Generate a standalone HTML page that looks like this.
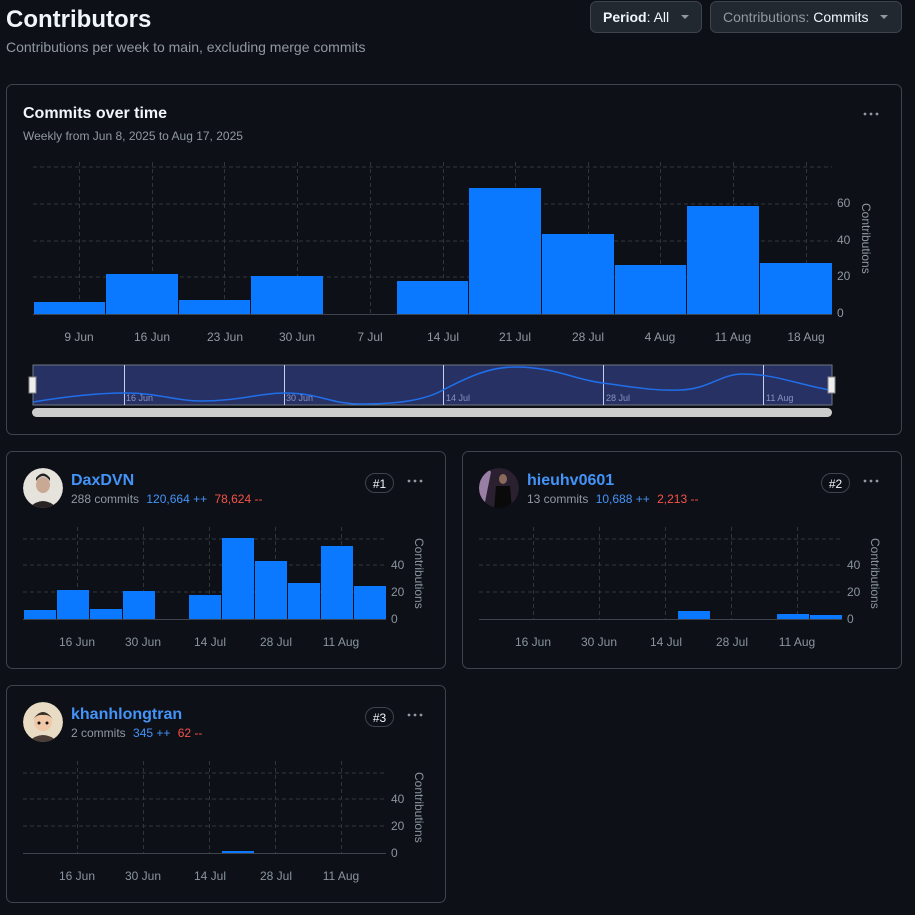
<!DOCTYPE html>
<html><head><meta charset="utf-8"><style>
html,body{margin:0;padding:0;background:#0d1117;}
body{width:915px;height:910px;overflow:hidden;font-family:"Liberation Sans",sans-serif;}
svg text{font-family:"Liberation Sans",sans-serif;}
</style></head><body>
<svg width="915" height="910" viewBox="0 0 915 910" xmlns="http://www.w3.org/2000/svg">
<defs>
<clipPath id="c1"><circle cx="43" cy="488" r="20"/></clipPath>
<clipPath id="c2"><circle cx="499" cy="488" r="20"/></clipPath>
<clipPath id="c3"><circle cx="43" cy="722" r="20"/></clipPath>
<g id="mini">
  <g stroke="#30363d" stroke-dasharray="4 3" stroke-width="1">
    <line x1="23" y1="539" x2="386" y2="539"/>
    <line x1="23" y1="565" x2="386" y2="565"/>
    <line x1="23" y1="592" x2="386" y2="592"/>
    <line x1="77.5" y1="527" x2="77.5" y2="619"/>
    <line x1="143.5" y1="527" x2="143.5" y2="619"/>
    <line x1="209.5" y1="527" x2="209.5" y2="619"/>
    <line x1="275.5" y1="527" x2="275.5" y2="619"/>
    <line x1="341.5" y1="527" x2="341.5" y2="619"/>
  </g>
  <g fill="#8b949e" font-size="12">
    <text x="391" y="569">40</text><text x="391" y="596">20</text><text x="391" y="623">0</text>
    <text x="77" y="646" text-anchor="middle">16 Jun</text>
    <text x="143" y="646" text-anchor="middle">30 Jun</text>
    <text x="210" y="646" text-anchor="middle">14 Jul</text>
    <text x="276" y="646" text-anchor="middle">28 Jul</text>
    <text x="341" y="646" text-anchor="middle">11 Aug</text>
    <text transform="translate(415,538) rotate(90)" font-size="12">Contributions</text>
  </g>
</g>
</defs>

<!-- header -->
<text x="6" y="27" fill="#f0f6fc" font-size="24" font-weight="bold">Contributors</text>
<text x="6" y="52" fill="#9198a1" font-size="14">Contributions per week to main, excluding merge commits</text>
<rect x="590.5" y="1.5" width="111" height="31" rx="6" fill="#212830" stroke="#3d444d"/>
<text x="603" y="22" fill="#f0f6fc" font-size="14"><tspan font-weight="bold">Period</tspan>: All</text>
<path d="M681 15h8l-4 4z" fill="#9198a1"/>
<rect x="710.5" y="1.5" width="191" height="31" rx="6" fill="#212830" stroke="#3d444d"/>
<text x="723" y="22" fill="#9198a1" font-size="14">Contributions: <tspan fill="#f0f6fc">Commits</tspan></text>
<path d="M880 15h8l-4 4z" fill="#9198a1"/>

<!-- main card -->
<rect x="6.5" y="84.5" width="895" height="350" rx="6" fill="#0d1117" stroke="#3d444d"/>
<text x="23" y="118" fill="#f0f6fc" font-size="16" font-weight="bold">Commits over time</text>
<text x="23" y="140" fill="#9198a1" font-size="12">Weekly from Jun 8, 2025 to Aug 17, 2025</text>
<g fill="#9198a1"><circle cx="865" cy="114" r="1.4"/><circle cx="871" cy="114" r="1.4"/><circle cx="877" cy="114" r="1.4"/></g>
<g stroke="#30363d" stroke-dasharray="4 3">
  <line x1="33" y1="167" x2="832" y2="167"/>
  <line x1="33" y1="204" x2="832" y2="204"/>
  <line x1="33" y1="241" x2="832" y2="241"/>
  <line x1="33" y1="277" x2="832" y2="277"/>
  <line x1="79.5" y1="162" x2="79.5" y2="314"/><line x1="152.5" y1="162" x2="152.5" y2="314"/>
  <line x1="224.5" y1="162" x2="224.5" y2="314"/><line x1="297.5" y1="162" x2="297.5" y2="314"/>
  <line x1="370.5" y1="162" x2="370.5" y2="314"/><line x1="443.5" y1="162" x2="443.5" y2="314"/>
  <line x1="515.5" y1="162" x2="515.5" y2="314"/><line x1="588.5" y1="162" x2="588.5" y2="314"/>
  <line x1="660.5" y1="162" x2="660.5" y2="314"/><line x1="733.5" y1="162" x2="733.5" y2="314"/>
  <line x1="806.5" y1="162" x2="806.5" y2="314"/>
</g>
<g fill="#0a78ff">
  <rect x="34" y="302" width="71" height="12"/><rect x="106" y="274" width="72" height="40"/>
  <rect x="179" y="300" width="71" height="14"/><rect x="251" y="276" width="72" height="38"/>
  <rect x="397" y="281" width="71" height="33"/><rect x="469" y="188" width="72" height="126"/>
  <rect x="542" y="234" width="72" height="80"/><rect x="615" y="265" width="71" height="49"/>
  <rect x="687" y="206" width="72" height="108"/><rect x="760" y="263" width="72" height="51"/>
</g>
<line x1="33" y1="314.5" x2="832" y2="314.5" stroke="#3d444d"/>
<g fill="#9198a1" font-size="12" text-anchor="middle">
  <text x="79" y="341">9 Jun</text><text x="152" y="341">16 Jun</text><text x="225" y="341">23 Jun</text>
  <text x="297" y="341">30 Jun</text><text x="370" y="341">7 Jul</text><text x="443" y="341">14 Jul</text>
  <text x="515" y="341">21 Jul</text><text x="588" y="341">28 Jul</text><text x="660" y="341">4 Aug</text>
  <text x="733" y="341">11 Aug</text><text x="806" y="341">18 Aug</text>
</g>
<g fill="#9198a1" font-size="12">
  <text x="837" y="207">60</text><text x="837" y="244">40</text><text x="837" y="280">20</text><text x="837" y="317">0</text>
  <text transform="translate(862,203) rotate(90)">Contributions</text>
</g>
<!-- brush -->
<rect x="33" y="365" width="799" height="40" fill="#283163" stroke="#6e7681" stroke-width="1"/>
<g stroke="#c8d0f0" stroke-width="1">
  <line x1="124.5" y1="365" x2="124.5" y2="405"/><line x1="284.5" y1="365" x2="284.5" y2="405"/>
  <line x1="443.5" y1="365" x2="443.5" y2="405"/><line x1="603.5" y1="365" x2="603.5" y2="405"/>
  <line x1="763.5" y1="365" x2="763.5" y2="405"/>
</g>
<path d="M33,402 C70,396 100,393 124,393 C160,393 175,401 200,401 C240,401 260,393 284,393 C320,393 330,404 360,404 C400,404 425,400 443,390 C470,376 490,367 515,367 C555,367 575,380 603,383 C640,388 655,391 680,390 C710,389 720,374 743,374 C775,374 800,385 830,390" fill="none" stroke="#1f6feb" stroke-width="1.5"/>
<g fill="#8a93c0" font-size="9">
  <text x="126" y="401">16 Jun</text><text x="286" y="401">30 Jun</text><text x="446" y="401">14 Jul</text>
  <text x="606" y="401">28 Jul</text><text x="766" y="401">11 Aug</text>
</g>
<rect x="29" y="377" width="7" height="16" fill="#eee" stroke="#888"/>
<rect x="828" y="377" width="7" height="16" fill="#eee" stroke="#888"/>
<rect x="32" y="408" width="800" height="9" rx="4.5" fill="#cccccc"/>

<!-- card 1 -->
<rect x="6.5" y="451.5" width="439" height="217" rx="6" fill="#0d1117" stroke="#3d444d"/>
<g clip-path="url(#c1)">
<circle cx="43" cy="488" r="20" fill="#e6e2dc"/>
<ellipse cx="43" cy="485" rx="7" ry="8" fill="#c9a994"/><path d="M36 481 q7-10 14 0 v-3 q-7-9 -14 0z" fill="#222"/>
<path d="M27 510 q16-18 32 0z" fill="#2a2424"/>
</g>
<text x="71" y="485" fill="#4493f8" font-size="16" font-weight="bold">DaxDVN</text>
<text x="71" y="503" fill="#9198a1" font-size="12">288 commits <tspan fill="#4493f8" dx="4">120,664 ++</tspan> <tspan fill="#f85149" dx="4">78,624 --</tspan></text>
<rect x="365.5" y="473.5" width="28" height="19" rx="9.5" fill="none" stroke="#3d444d"/>
<text x="379.5" y="488" fill="#f0f6fc" font-size="12" text-anchor="middle">#1</text>
<g fill="#9198a1"><circle cx="409" cy="481" r="1.4"/><circle cx="415" cy="481" r="1.4"/><circle cx="421" cy="481" r="1.4"/></g>
<use href="#mini"/>
<g fill="#0a78ff">
  <rect x="24" y="610" width="32" height="9"/><rect x="57" y="590" width="32" height="29"/>
  <rect x="90" y="609" width="32" height="10"/><rect x="123" y="591" width="32" height="28"/>
  <rect x="189" y="595" width="32" height="24"/><rect x="222" y="538" width="32" height="81"/>
  <rect x="255" y="561" width="32" height="58"/><rect x="288" y="583" width="32" height="36"/>
  <rect x="321" y="546" width="32" height="73"/><rect x="354" y="586" width="32" height="33"/>
</g>
<line x1="23" y1="619.5" x2="386" y2="619.5" stroke="#3d444d"/>

<!-- card 2 -->
<rect x="462.5" y="451.5" width="439" height="217" rx="6" fill="#0d1117" stroke="#3d444d"/>
<g clip-path="url(#c2)">
<circle cx="499" cy="488" r="20" fill="#2a2030"/>
<path d="M479 470 q8-4 12 2 l-6 30 h-6z" fill="#c9a8d8" opacity="0.7"/>
<ellipse cx="503" cy="479" rx="4" ry="5" fill="#8a6a5a"/><path d="M496 486 h14 l2 24 h-18z" fill="#0a0a0a"/>
</g>
<text x="527" y="485" fill="#4493f8" font-size="16" font-weight="bold">hieuhv0601</text>
<text x="527" y="503" fill="#9198a1" font-size="12">13 commits <tspan fill="#4493f8" dx="4">10,688 ++</tspan> <tspan fill="#f85149" dx="4">2,213 --</tspan></text>
<rect x="821.5" y="473.5" width="28" height="19" rx="9.5" fill="none" stroke="#3d444d"/>
<text x="835.5" y="488" fill="#f0f6fc" font-size="12" text-anchor="middle">#2</text>
<g fill="#9198a1"><circle cx="865" cy="481" r="1.4"/><circle cx="871" cy="481" r="1.4"/><circle cx="877" cy="481" r="1.4"/></g>
<g transform="translate(456,0)"><use href="#mini"/></g>
<g fill="#0a78ff">
  <rect x="678" y="611" width="32" height="8"/><rect x="777" y="614" width="32" height="5"/><rect x="810" y="615" width="32" height="4"/>
</g>
<line x1="479" y1="619.5" x2="842" y2="619.5" stroke="#3d444d"/>

<!-- card 3 -->
<rect x="6.5" y="685.5" width="439" height="217" rx="6" fill="#0d1117" stroke="#3d444d"/>
<g clip-path="url(#c3)">
<circle cx="43" cy="722" r="20" fill="#e8dcc4"/>
<path d="M25 745 q18-20 36 0z" fill="#4a3e36"/>
<ellipse cx="43" cy="722" rx="9" ry="9" fill="#f0c8a8"/>
<path d="M32 721 q11-18 22 0 q-4-7 -11-6 q-7-1 -11 6z" fill="#3a302a"/>
<circle cx="39" cy="723" r="1.5" fill="#111"/><circle cx="47" cy="723" r="1.5" fill="#111"/>
</g>
<text x="71" y="719" fill="#4493f8" font-size="16" font-weight="bold">khanhlongtran</text>
<text x="71" y="737" fill="#9198a1" font-size="12">2 commits <tspan fill="#4493f8" dx="4">345 ++</tspan> <tspan fill="#f85149" dx="4">62 --</tspan></text>
<rect x="365.5" y="707.5" width="28" height="19" rx="9.5" fill="none" stroke="#3d444d"/>
<text x="379.5" y="722" fill="#f0f6fc" font-size="12" text-anchor="middle">#3</text>
<g fill="#9198a1"><circle cx="409" cy="715" r="1.4"/><circle cx="415" cy="715" r="1.4"/><circle cx="421" cy="715" r="1.4"/></g>
<g transform="translate(0,234)"><use href="#mini"/></g>
<rect x="222" y="851" width="32" height="2" fill="#0a78ff"/>
<line x1="23" y1="853.5" x2="386" y2="853.5" stroke="#3d444d"/>
</svg>
</body></html>
